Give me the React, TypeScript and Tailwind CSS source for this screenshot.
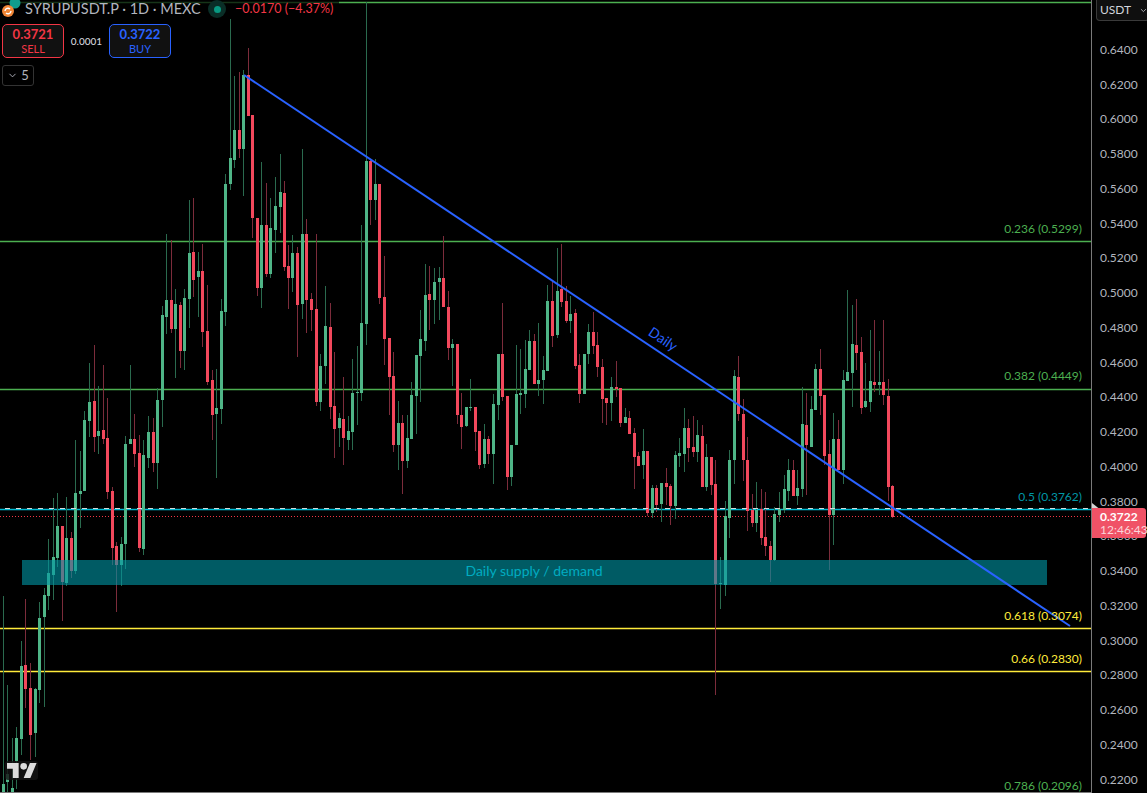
import React from "react";
import { ChevronDown } from "lucide-react";

// [x, bodyTop, bodyBottom, wickTop, wickBottom, side] in chart pixels
type Candle = [number, number, number, number, number, "g" | "r"];

const candles: Candle[] = [
  [3, 784, 793, 596, 793, "g"], [7, 774, 782, 685, 793, "g"], [12, 788, 793, 738, 793, "g"], [16, 738, 761, 727, 789, "g"],
  [21, 666, 739, 641, 755, "g"], [25, 665, 689, 599, 708, "r"], [30, 688, 735, 663, 760, "r"], [35, 689, 733, 688, 757, "g"],
  [39, 618, 690, 602, 703, "g"], [44, 595, 617, 588, 707, "g"], [48, 573, 596, 539, 610, "g"], [53, 557, 575, 498, 600, "g"],
  [57, 526, 558, 493, 567, "g"], [62, 526, 582, 526, 621, "r"], [66, 538, 583, 497, 586, "g"], [71, 538, 571, 532, 578, "r"],
  [75, 493, 571, 440, 574, "g"], [80, 491, 494, 451, 528, "g"], [84, 420, 491, 411, 491, "g"], [89, 402, 421, 363, 437, "g"],
  [94, 401, 437, 345, 452, "r"], [98, 431, 436, 386, 454, "g"], [103, 430, 439, 365, 444, "r"], [107, 438, 492, 398, 499, "r"],
  [112, 491, 548, 487, 565, "r"], [116, 546, 565, 542, 612, "r"], [121, 544, 565, 537, 586, "g"], [125, 444, 544, 436, 569, "g"],
  [130, 439, 444, 365, 444, "g"], [134, 439, 454, 414, 467, "r"], [139, 453, 548, 435, 552, "r"], [143, 455, 549, 440, 555, "g"],
  [148, 432, 458, 416, 468, "g"], [153, 432, 463, 418, 472, "r"], [157, 400, 463, 388, 489, "g"], [162, 315, 400, 306, 427, "g"],
  [166, 300, 317, 234, 334, "g"], [171, 300, 329, 240, 333, "r"], [175, 304, 329, 289, 378, "g"], [180, 305, 351, 302, 368, "r"],
  [184, 298, 351, 289, 370, "g"], [189, 253, 299, 200, 328, "g"], [193, 252, 280, 198, 297, "r"], [198, 271, 277, 252, 317, "g"],
  [202, 271, 332, 244, 347, "r"], [207, 331, 382, 285, 385, "r"], [212, 380, 415, 370, 440, "r"], [216, 408, 414, 369, 478, "g"],
  [221, 311, 409, 299, 424, "g"], [225, 184, 312, 174, 326, "g"], [230, 158, 184, 19, 190, "g"], [234, 130, 160, 76, 168, "g"],
  [239, 130, 149, 72, 158, "r"], [243, 75, 149, 70, 196, "g"], [248, 75, 116, 48, 116, "r"], [252, 115, 218, 115, 238, "r"],
  [257, 218, 288, 218, 296, "r"], [261, 225, 288, 162, 308, "g"], [266, 225, 274, 183, 277, "r"], [270, 228, 274, 198, 278, "g"],
  [275, 206, 230, 177, 253, "g"], [280, 192, 207, 154, 233, "g"], [284, 193, 267, 181, 271, "r"], [288, 266, 278, 245, 309, "r"],
  [292, 253, 278, 235, 292, "g"], [297, 253, 305, 247, 357, "r"], [302, 234, 304, 149, 319, "g"], [306, 234, 300, 219, 333, "r"],
  [311, 299, 310, 293, 331, "r"], [316, 309, 402, 234, 406, "r"], [320, 366, 402, 354, 411, "g"], [325, 326, 366, 286, 384, "g"],
  [330, 327, 407, 303, 419, "r"], [334, 406, 429, 352, 458, "r"], [339, 418, 428, 413, 447, "g"], [343, 419, 438, 377, 465, "r"],
  [348, 431, 440, 416, 450, "g"], [352, 393, 432, 359, 450, "g"], [357, 392, 393, 346, 425, "g"], [361, 323, 393, 225, 401, "g"],
  [366, 161, 324, 2, 345, "g"], [370, 161, 200, 160, 225, "r"], [375, 184, 200, 159, 220, "g"], [379, 184, 298, 184, 304, "r"],
  [384, 297, 339, 256, 365, "r"], [389, 338, 377, 338, 415, "r"], [393, 376, 445, 352, 452, "r"], [398, 423, 445, 401, 470, "g"],
  [402, 423, 461, 415, 494, "r"], [407, 438, 461, 415, 468, "g"], [411, 395, 439, 382, 439, "g"], [416, 355, 396, 355, 434, "g"],
  [420, 339, 356, 310, 402, "g"], [425, 295, 341, 264, 351, "g"], [429, 294, 300, 266, 330, "r"], [434, 282, 300, 268, 324, "g"],
  [439, 278, 282, 267, 320, "g"], [443, 278, 307, 236, 307, "r"], [448, 307, 348, 291, 360, "r"], [452, 344, 348, 339, 386, "g"],
  [457, 344, 415, 344, 424, "r"], [461, 415, 427, 393, 449, "r"], [466, 407, 426, 407, 427, "g"], [470, 407, 408, 379, 411, "g"],
  [475, 407, 432, 407, 451, "r"], [479, 431, 465, 431, 469, "r"], [484, 439, 464, 424, 468, "g"], [488, 439, 454, 436, 464, "r"],
  [493, 404, 454, 394, 484, "g"], [498, 354, 405, 354, 420, "g"], [502, 354, 397, 303, 401, "r"], [507, 396, 477, 396, 490, "r"],
  [511, 445, 477, 445, 486, "g"], [516, 394, 445, 345, 445, "g"], [520, 393, 395, 349, 414, "g"], [525, 369, 394, 340, 408, "g"],
  [529, 341, 370, 330, 370, "g"], [534, 341, 384, 334, 384, "r"], [538, 380, 384, 323, 396, "g"], [543, 370, 380, 356, 404, "g"],
  [547, 301, 371, 285, 371, "g"], [552, 301, 336, 280, 347, "r"], [557, 291, 335, 248, 338, "g"], [561, 289, 302, 244, 307, "r"],
  [566, 301, 321, 286, 323, "r"], [570, 314, 321, 296, 333, "g"], [575, 313, 366, 309, 369, "r"], [579, 365, 394, 354, 403, "r"],
  [584, 354, 394, 354, 394, "g"], [588, 332, 354, 324, 364, "g"], [593, 332, 346, 312, 354, "r"], [597, 345, 367, 332, 377, "r"],
  [602, 367, 399, 359, 423, "r"], [606, 398, 403, 398, 425, "r"], [611, 387, 403, 377, 421, "g"], [616, 387, 389, 361, 397, "r"],
  [620, 388, 423, 388, 427, "r"], [625, 417, 423, 408, 423, "g"], [629, 418, 434, 411, 434, "r"], [634, 433, 457, 428, 489, "r"],
  [638, 456, 466, 452, 466, "r"], [643, 451, 465, 429, 479, "g"], [647, 451, 513, 451, 516, "r"], [652, 488, 513, 485, 518, "g"],
  [656, 488, 505, 485, 512, "r"], [661, 483, 504, 483, 522, "g"], [666, 483, 487, 468, 505, "r"], [670, 486, 506, 484, 525, "r"],
  [675, 455, 506, 451, 519, "g"], [679, 453, 456, 438, 467, "g"], [684, 428, 454, 408, 472, "g"], [688, 428, 448, 419, 462, "r"],
  [693, 447, 452, 416, 457, "r"], [697, 435, 452, 420, 462, "g"], [702, 436, 487, 425, 487, "r"], [706, 457, 487, 444, 491, "g"],
  [711, 457, 485, 457, 495, "r"], [715, 484, 584, 460, 695, "r"], [720, 583, 584, 557, 609, "g"], [725, 516, 585, 501, 596, "g"],
  [729, 460, 518, 450, 538, "g"], [734, 376, 460, 370, 484, "g"], [738, 377, 414, 356, 421, "r"], [743, 414, 460, 399, 481, "r"],
  [747, 460, 511, 437, 531, "r"], [752, 510, 523, 494, 527, "r"], [756, 510, 523, 482, 532, "g"], [761, 509, 538, 489, 545, "r"],
  [765, 537, 546, 492, 556, "r"], [770, 546, 560, 541, 582, "r"], [774, 514, 560, 507, 561, "g"], [779, 509, 515, 492, 522, "g"],
  [784, 489, 510, 475, 513, "g"], [788, 470, 491, 459, 501, "g"], [793, 470, 496, 460, 496, "r"], [797, 488, 496, 470, 505, "g"],
  [802, 424, 489, 387, 497, "g"], [806, 425, 445, 393, 495, "r"], [811, 409, 447, 396, 447, "g"], [815, 369, 410, 364, 410, "g"],
  [820, 369, 396, 349, 415, "r"], [824, 395, 456, 395, 465, "r"], [829, 454, 515, 440, 570, "r"], [833, 439, 515, 413, 545, "g"],
  [838, 439, 470, 420, 470, "r"], [843, 380, 470, 370, 484, "g"], [847, 372, 381, 290, 381, "g"], [852, 344, 373, 305, 407, "g"],
  [856, 345, 353, 299, 370, "r"], [861, 352, 408, 337, 414, "r"], [865, 401, 407, 363, 408, "g"], [870, 381, 402, 330, 412, "g"],
  [874, 382, 385, 320, 392, "r"], [879, 382, 385, 351, 395, "g"], [883, 382, 395, 320, 405, "r"], [888, 396, 487, 379, 501, "r"],
  [892, 486, 517, 485, 518, "r"],
];

const fibs = [
  { y: 2.5, color: "#4caf50", label: "", labelY: 0 },
  { y: 241.5, color: "#4caf50", label: "0.236 (0.5299)", labelY: 229 },
  { y: 389.5, color: "#4caf50", label: "0.382 (0.4449)", labelY: 376 },
  { y: 509.5, color: "#00bcd4", label: "0.5 (0.3762)", labelY: 497 },
  { y: 628.5, color: "#ffeb3b", label: "0.618 (0.3074)", labelY: 616 },
  { y: 671.5, color: "#ffeb3b", label: "0.66 (0.2830)", labelY: 659 },
];

// 0.3600 stays in the list, the price tag covers most of it
const prices = [
  "0.6400", "0.6200", "0.6000", "0.5800", "0.5600", "0.5400", "0.5200", "0.5000", "0.4800", "0.4600", "0.4400",
  "0.4200", "0.4000", "0.3800", "0.3600", "0.3400", "0.3200", "0.3000", "0.2800", "0.2600", "0.2400", "0.2200",
];

const GREEN = "#4fb587";
const RED = "#f2485c";
const GREEN_WICK = "#2a6a4e";
const RED_WICK = "#7c2c3b";

function Chart() {
  return (
    <svg width={1091} height={792} className="block font-['Lato',sans-serif]">
      {fibs.map((f) => (
        <g key={f.y}>
          <rect x={0} y={f.y - 1.5} width={1091} height={3} fill={f.color} opacity={0.25} />
          <rect x={0} y={f.y - 0.5} width={1091} height={1} fill={f.color} />
        </g>
      ))}
      <line x1={0} x2={1091} y1={516.5} y2={516.5} stroke="#f23645" strokeDasharray="1 2" />

      {candles.map(([x, top, bottom, wickTop, wickBottom, side]) => (
        <g key={x}>
          <rect x={x} y={wickTop} width={1} height={wickBottom - wickTop} fill={side === "g" ? GREEN_WICK : RED_WICK} />
          <rect x={x - 1} y={top} width={3} height={bottom - top} fill={side === "g" ? GREEN : RED} />
        </g>
      ))}

      {/* supply / demand box sits over the candles */}
      <rect x={22} y={560} width={1025} height={25} fill="#0097a7" fillOpacity={0.6} />
      <text x={534} y={576} textAnchor="middle" fontSize={14} fill="#00acc1">
        Daily supply / demand
      </text>

      <line x1={0} x2={1091} y1={508.5} y2={508.5} stroke="#d8d8d8" strokeDasharray="5 6" strokeDashoffset={-5} />

      <line x1={244} y1={75} x2={1070} y2={626} stroke="#2962ff" strokeWidth={2} />
      <text x={663} y={344} textAnchor="middle" fontSize={14} fill="#2962ff" transform="rotate(33.7 663 339)">
        Daily
      </text>

      {fibs.filter((f) => f.label).map((f) => (
        <text
          key={f.label}
          x={1082}
          y={f.labelY + 4}
          textAnchor="end"
          fontSize={12}
          fill={f.color === "#00bcd4" ? "#0097a7" : f.color}
        >
          {f.label}
        </text>
      ))}
      <text x={1082} y={790} textAnchor="end" fontSize={12} fill="#4caf50">
        0.786 (0.2096)
      </text>
    </svg>
  );
}

function Legend() {
  return (
    <div className="absolute top-0 left-0 w-[339px]">
      <div className="flex h-[18px] items-center bg-black/70 text-[14.5px] leading-none">
        <div className="relative h-[18px] w-[25px] shrink-0">
          <svg width={25} height={18} viewBox="0 0 25 18" className="absolute left-0 top-0 overflow-visible">
            <circle cx={15} cy={3} r={5.5} fill="#0f9c8c" />
            <circle cx={8} cy={11} r={6} fill="#f08636" />
            <path d="M5 11a3 3 0 0 1 5-2M11 11a3 3 0 0 1-5 2" fill="none" stroke="#fff" strokeWidth={1.4} />
          </svg>
        </div>
        <span className="w-[183px] shrink-0 whitespace-nowrap text-[#b2b5be]">SYRUPUSDT.P · 1D · MEXC</span>
        <div className="flex h-[18px] w-[18px] shrink-0 items-center justify-center rounded-full bg-[#0a2e27]">
          <div className="h-[7px] w-[7px] rounded-full bg-[#089981]" />
        </div>
        <span className="ml-[9px] whitespace-nowrap text-[12.5px] text-[#f23645]">−0.0170 (−4.37%)</span>
      </div>

      <div className="mt-[6px] flex items-center pl-[2px]">
        <div className="flex h-[34px] w-[62px] flex-col items-center justify-center rounded-[5px] border border-[#f23645] bg-[#111111]">
          <span className="text-[13px] font-bold leading-[15px] text-[#f23645]">0.3721</span>
          <span className="text-[11px] leading-[13px] text-[#f23645]">SELL</span>
        </div>
        <span className="w-[45px] text-center text-[10px] font-medium text-[#d1d4dc]">0.0001</span>
        <div className="flex h-[34px] w-[62px] flex-col items-center justify-center rounded-[5px] border border-[#2962ff] bg-[#111111]">
          <span className="text-[13px] font-bold leading-[15px] text-[#2962ff]">0.3722</span>
          <span className="text-[11px] leading-[13px] text-[#2962ff]">BUY</span>
        </div>
      </div>

      <div className="ml-[2px] mt-[7px] flex h-[21px] w-[32px] items-center justify-center gap-[3px] rounded-[3px] border border-[#333333] text-[13px] text-[#b2b5be]">
        <ChevronDown size={11} />
        <span>5</span>
      </div>
    </div>
  );
}

function PriceScale() {
  return (
    <div className="relative h-[793px] w-[56px] shrink-0 border-l border-[#7a7a7a] text-[12px] text-[#b2b5be]">
      <div className="flex flex-col pl-[8px] pt-[32.6px]">
        {prices.map((p) => (
          <div key={p} className="flex h-[34.76px] items-center">
            {p}
          </div>
        ))}
      </div>

      <div className="absolute right-[-2px] top-0 flex h-[21px] w-[53px] items-center gap-[8px] rounded-b-[4px] border border-t-0 border-[#3a3a3a] bg-[#0f0f0f] pl-[3px] text-[#d1d4dc]">
        <span>USDT</span>
        <ChevronDown size={9} />
      </div>

      <svg width={7} height={11} viewBox="0 0 7 11" className="absolute left-0 top-[503px]">
        <path d="M0 0L7 5.5L0 11Z" fill="#d4d4d4" />
      </svg>
      <div className="absolute left-0 top-[508px] flex h-[30px] w-[54px] flex-col justify-center rounded-r-[3px] bg-[#f05266] pl-[8px] leading-[13px]">
        <span className="font-bold text-white">0.3722</span>
        <span className="text-[#fbd5da]">12:46:43</span>
      </div>
    </div>
  );
}

export default function App() {
  return (
    <div className="flex h-[793px] w-[1147px] overflow-hidden bg-black font-['Lato',sans-serif]">
      <div className="relative h-[793px] w-[1091px] shrink-0 border-b border-[#7a7a7a]">
        <Chart />
        <Legend />
        {/* TradingView mark */}
        <div className="absolute bottom-[12px] left-[5px] flex h-[19px] w-[33px] items-center justify-center rounded-[3px] bg-[#141414]/80">
          <svg width={30} height={15} viewBox="0 4 36 18">
            <path d="M14 22H7V11H0V4h14v18zM28 22h-8l7.5-18h8L28 22z" fill="#dcdcdc" />
            <circle cx={20} cy={8} r={4} fill="#dcdcdc" />
          </svg>
        </div>
      </div>
      <PriceScale />
    </div>
  );
}
